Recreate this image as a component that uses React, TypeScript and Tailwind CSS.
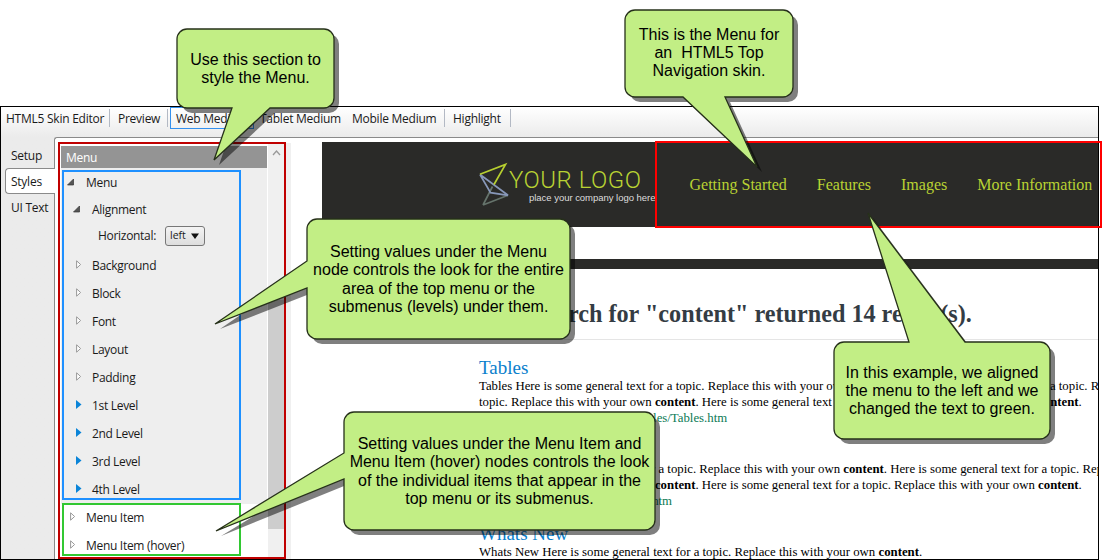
import type { ReactNode } from 'react';
import clsx from 'clsx';

const GENERAL = 'Here is some general text for a topic. Replace this with your own ';

type Marker = 'open' | 'closed' | 'blue';

function Arrow({ kind }: { kind: Marker }) {
  if (kind === 'open') {
    return (
      <svg width="8" height="8" viewBox="0 0 8 8" className="shrink-0">
        <path d="M6.5 1V7H0.5Z" fill="#555" stroke="#333" strokeWidth="0.7" />
      </svg>
    );
  }
  return (
    <svg width="6" height="9" viewBox="0 0 6 9" className="shrink-0">
      {kind === 'blue' ? (
        <path d="M0 0V9L5.5 4.5Z" fill="#0a84d8" />
      ) : (
        <path d="M0.6 0.8V8.2L4.6 4.5Z" fill="#fff" stroke="#999" strokeWidth="1" />
      )}
    </svg>
  );
}

function Row({ kind, label, className }: { kind: Marker; label: string; className: string }) {
  return (
    <div className={clsx('flex shrink-0 items-center', className)}>
      <div className="-mt-[3px] flex w-4 shrink-0">
        <Arrow kind={kind} />
      </div>
      <span>{label}</span>
    </div>
  );
}

function Separator() {
  return <div className="h-[18px] w-px shrink-0 bg-[#b3b9c4]" />;
}

function Result({ title, children, url, urlPad }: { title: string; children: ReactNode; url: string; urlPad: string }) {
  return (
    <article className="h-[83px] shrink-0 whitespace-nowrap text-[12.8px] leading-4">
      <h2 className="h-[20px] text-[19px] leading-[20px] text-[#0a80cc]">{title}</h2>
      {children}
      <p className={clsx('text-[#0b7a55]', urlPad)}>{url}</p>
    </article>
  );
}

function Callout({ path, box, lines }: { path: string; box: string; lines: string[] }) {
  return (
    <>
      <svg width="1111" height="560" className="pointer-events-none absolute left-0 top-0">
        <path d={path} transform="translate(5 5)" fill="#000" fillOpacity="0.5" />
        <path d={path} fill="#c2ee85" stroke="#26301a" strokeWidth="1.3" />
      </svg>
      <div
        className={clsx(
          "absolute flex flex-col items-center justify-center whitespace-pre pt-px font-['Liberation_Sans',sans-serif] text-[16px] leading-[18.3px] text-black",
          box,
        )}
      >
        {lines.map((line) => (
          <span key={line}>{line}</span>
        ))}
      </div>
    </>
  );
}

function Toolbar() {
  return (
    <div className="flex h-[30px] shrink-0 items-start pt-[2px] leading-[19px]">
      <div className="w-[108px] pl-[5px]">HTML5 Skin Editor</div>
      <Separator />
      <div className="w-[57px] pl-2">Preview</div>
      <Separator />
      <div className="-mt-[2px] ml-[2px] h-[22px] w-[84px] border border-[#3390ee] pl-[5px] pt-px">Web Medium</div>
      <div className="ml-[6px] w-[92px]">Tablet Medium</div>
      <div className="w-[92px]">Mobile Medium</div>
      <Separator />
      <div className="w-[65px] pl-2">Highlight</div>
      <Separator />
    </div>
  );
}

function StylePanel() {
  return (
    <div className="ml-[6px] mt-[5px] flex w-[230px] shrink-0 tracking-[-0.3px]">
      <div className="flex w-[207px] flex-col pt-[3px]">
        <div className="mr-px h-[22px] shrink-0 bg-[#949494] pl-[5px] leading-[24px] text-white">Menu</div>
        <div className="mr-px flex h-[336px] shrink-0 flex-col bg-[#eee] pl-px pt-[2px]">
          <div className="flex h-[330px] w-[179px] flex-col border-2 border-[#1e90ff] pt-px">
            <Row kind="open" label="Menu" className="h-5 pl-[3px] [&>span]:ml-[3px]" />
            <Row kind="open" label="Alignment" className="h-[34px] pl-[9px] [&>span]:ml-[3px]" />
            <div className="flex h-5 shrink-0 items-center pl-[34px]">
              <span className="-mt-0.5 w-[58px]">Horizontal:</span>
              <div className="-mt-[3px] ml-[9px] flex h-5 w-10 items-center justify-between rounded-[3px] border border-[#777] bg-linear-to-b from-[#f4f4f4] to-[#ddd] pl-1 pr-[5px] text-[10.5px] tracking-normal">
                left
                <svg width="8" height="6" viewBox="0 0 8 6">
                  <path d="M0 0.5H8L4 6Z" fill="#111" />
                </svg>
              </div>
            </div>
            <Row kind="closed" label="Background" className="mt-[5px] h-7 pl-[12px]" />
            <Row kind="closed" label="Block" className="h-7 pl-[12px]" />
            <Row kind="closed" label="Font" className="h-7 pl-[12px]" />
            <Row kind="closed" label="Layout" className="h-7 pl-[12px]" />
            <Row kind="closed" label="Padding" className="h-7 pl-[12px]" />
            <Row kind="blue" label="1st Level" className="h-7 pl-[12px]" />
            <Row kind="blue" label="2nd Level" className="h-7 pl-[12px]" />
            <Row kind="blue" label="3rd Level" className="h-7 pl-[12px]" />
            <Row kind="blue" label="4th Level" className="h-7 pl-[12px]" />
          </div>
        </div>
        <div className="-mt-px ml-px h-[53px] w-[179px] shrink-0 border-2 border-[#32c832] bg-white pt-[4px]">
          <Row kind="closed" label="Menu Item" className="h-[18px] pl-[6px]" />
          <Row kind="closed" label="Menu Item (hover)" className="mt-[10px] h-[18px] pl-[6px]" />
        </div>
      </div>
      <div className="flex w-[23px] flex-col bg-[#f0f0f0]">
        <svg width="17" height="157" viewBox="0 0 17 157" className="shrink-0">
          <path d="M5 12L8.5 8L12 12" fill="none" stroke="#999" strokeWidth="1.3" />
        </svg>
        <div className="h-[229px] w-[17px] shrink-0 bg-[#cdcdcd]" />
      </div>
    </div>
  );
}

function Logo() {
  return (
    <div className="flex w-[334px] shrink-0 pl-[156px]">
      <svg width="31" height="85" viewBox="0 0 31 85" className="shrink-0" fill="none" strokeWidth="1.7">
        <path d="M5 63L30 53.3M5 63L14.5 44.5" stroke="#65736b" />
        <path d="M2 32.5L12.5 50.7L30 53.3L2 32.5" stroke="#8797b8" />
        <path d="M2 32.3L27.5 22.5L16 42.5" stroke="#b7cf2f" />
      </svg>
      <div className="flex flex-col whitespace-nowrap pt-[24px]">
        <div className="font-['Roboto',sans-serif] text-[24px] font-light leading-[28px] tracking-[0.5px] text-[#b9d233]">YOUR LOGO</div>
        <div className="-mt-[2px] pl-[20px] font-['Liberation_Sans',sans-serif] text-[9.5px] leading-[11px] tracking-[-0.03px] text-[#ddd]">
          place your company logo here
        </div>
      </div>
    </div>
  );
}

function Site() {
  return (
    <div className="ml-[31px] mt-[4px] flex min-w-0 flex-1 flex-col overflow-hidden font-['Liberation_Serif',serif] text-black">
      <header className="flex h-[85px] shrink-0 bg-[#2a2a28]">
        <Logo />
        <nav className="flex gap-[30px] whitespace-nowrap pl-[33.5px] text-[16px] leading-[86px] text-[#b9d233]">
          <span>Getting Started</span>
          <span>Features</span>
          <span>Images</span>
          <span>More Information</span>
        </nav>
      </header>
      <div className="mt-8 h-[10px] shrink-0 bg-[#2a2a28]" />
      <main className="flex flex-col pl-[157px]">
        <h1 className="mb-[18px] h-[71px] shrink-0 whitespace-nowrap border-b border-[#e5e5e5] pt-[31px] text-[24.2px] font-bold leading-[28px] text-[#343c44]">
          Your search for "content" returned 14 result(s).
        </h1>
        <Result title="Tables" url="Content/Tables/Tables.htm" urlPad="pl-[111px]">
          <p>Tables {GENERAL}<b>content</b>. {GENERAL}</p>
          <p>topic. Replace this with your own <b>content</b>. {GENERAL}<b>content</b>.</p>
        </Result>
        <Result title="Lists" url="Content/Lists.htm" urlPad="pl-[101px]">
          <p>Lists {GENERAL}<b>content</b>. {GENERAL}</p>
          <p>topic. Replace this with your own <b>content</b>. {GENERAL}<b>content</b>.</p>
        </Result>
        <Result title="Whats New" url="" urlPad="pl-0">
          <p>Whats New {GENERAL}<b>content</b>.</p>
        </Result>
      </main>
    </div>
  );
}

export default function App() {
  return (
    <div className="relative h-[560px] w-[1111px] overflow-hidden bg-white pt-[106px] font-['Open_Sans','Noto_Sans',sans-serif] text-[12px] text-[#1a1a1a]">
      <div className="flex h-[454px] w-[1099px] flex-col overflow-hidden whitespace-nowrap border border-black bg-[#ebebeb] bg-linear-to-b from-white from-0% to-[#ebebeb] to-[30px] tracking-[-0.25px]">
        <Toolbar />
        <div className="flex min-h-0 flex-1">
          <div className="z-0 -mr-px flex w-[54px] shrink-0 flex-col pl-1">
            <div className="mt-[7px] h-[24px] pl-[6px] leading-[24px]">Setup</div>
            <div className="relative h-[26px] rounded-l-[4px] border border-r-0 border-[#8a8a8a] bg-white pl-[5px] leading-[25px]">Styles</div>
            <div className="h-[26px] pl-[6px] leading-[27px]">UI Text</div>
          </div>
          <div className="flex min-w-0 flex-1 rounded-tl-[3px] border-l border-t border-[#8a8a8a] bg-white tracking-normal">
            <StylePanel />
            <Site />
          </div>
        </div>
      </div>

      <div className="absolute left-[58px] top-[142px] h-[417px] w-[228px] border-2 border-[#c00000]" />
      <div className="absolute left-[655px] top-[141px] h-[87px] w-[447px] border-2 border-[#f00]" />

      <Callout
        path="M187 29H324A10 10 0 0 1 334 39V98A10 10 0 0 1 324 108H270L214 160L232 108H187A10 10 0 0 1 177 98V39A10 10 0 0 1 187 29Z"
        box="left-[177px] top-[29px] h-[79px] w-[157px]"
        lines={['Use this section to', 'style the Menu.']}
      />
      <Callout
        path="M635 10H783A10 10 0 0 1 793 20V87A10 10 0 0 1 783 97H725L757 167L683 97H635A10 10 0 0 1 625 87V20A10 10 0 0 1 635 10Z"
        box="left-[625px] top-[9px] h-[87px] w-[168px]"
        lines={['This is the Menu for', 'an  HTML5 Top', 'Navigation skin.']}
      />
      <Callout
        path="M317 219H560A10 10 0 0 1 570 229V329A10 10 0 0 1 560 339H317A10 10 0 0 1 307 329V288L215 324L307 261V229A10 10 0 0 1 317 219Z"
        box="left-[307px] top-[219px] h-[120px] w-[263px]"
        lines={['Setting values under the Menu', 'node controls the look for the entire', 'area of the top menu or the', 'submenus (levels) under them.']}
      />
      <Callout
        path="M354 412H645A10 10 0 0 1 655 422V520A10 10 0 0 1 645 530H354A10 10 0 0 1 344 520V479L216 531L344 453V422A10 10 0 0 1 354 412Z"
        box="left-[344px] top-[412px] h-[118px] w-[311px]"
        lines={['Setting values under the Menu Item and', 'Menu Item (hover) nodes controls the look', 'of the individual items that appear in the', 'top menu or its submenus.']}
      />
      <Callout
        path="M844 342H909L868 213L965 342H1040A10 10 0 0 1 1050 352V429A10 10 0 0 1 1040 439H844A10 10 0 0 1 834 429V352A10 10 0 0 1 844 342Z"
        box="left-[834px] top-[342px] h-[97px] w-[216px]"
        lines={['In this example, we aligned', 'the menu to the left and we', 'changed the text to green.']}
      />
    </div>
  );
}
